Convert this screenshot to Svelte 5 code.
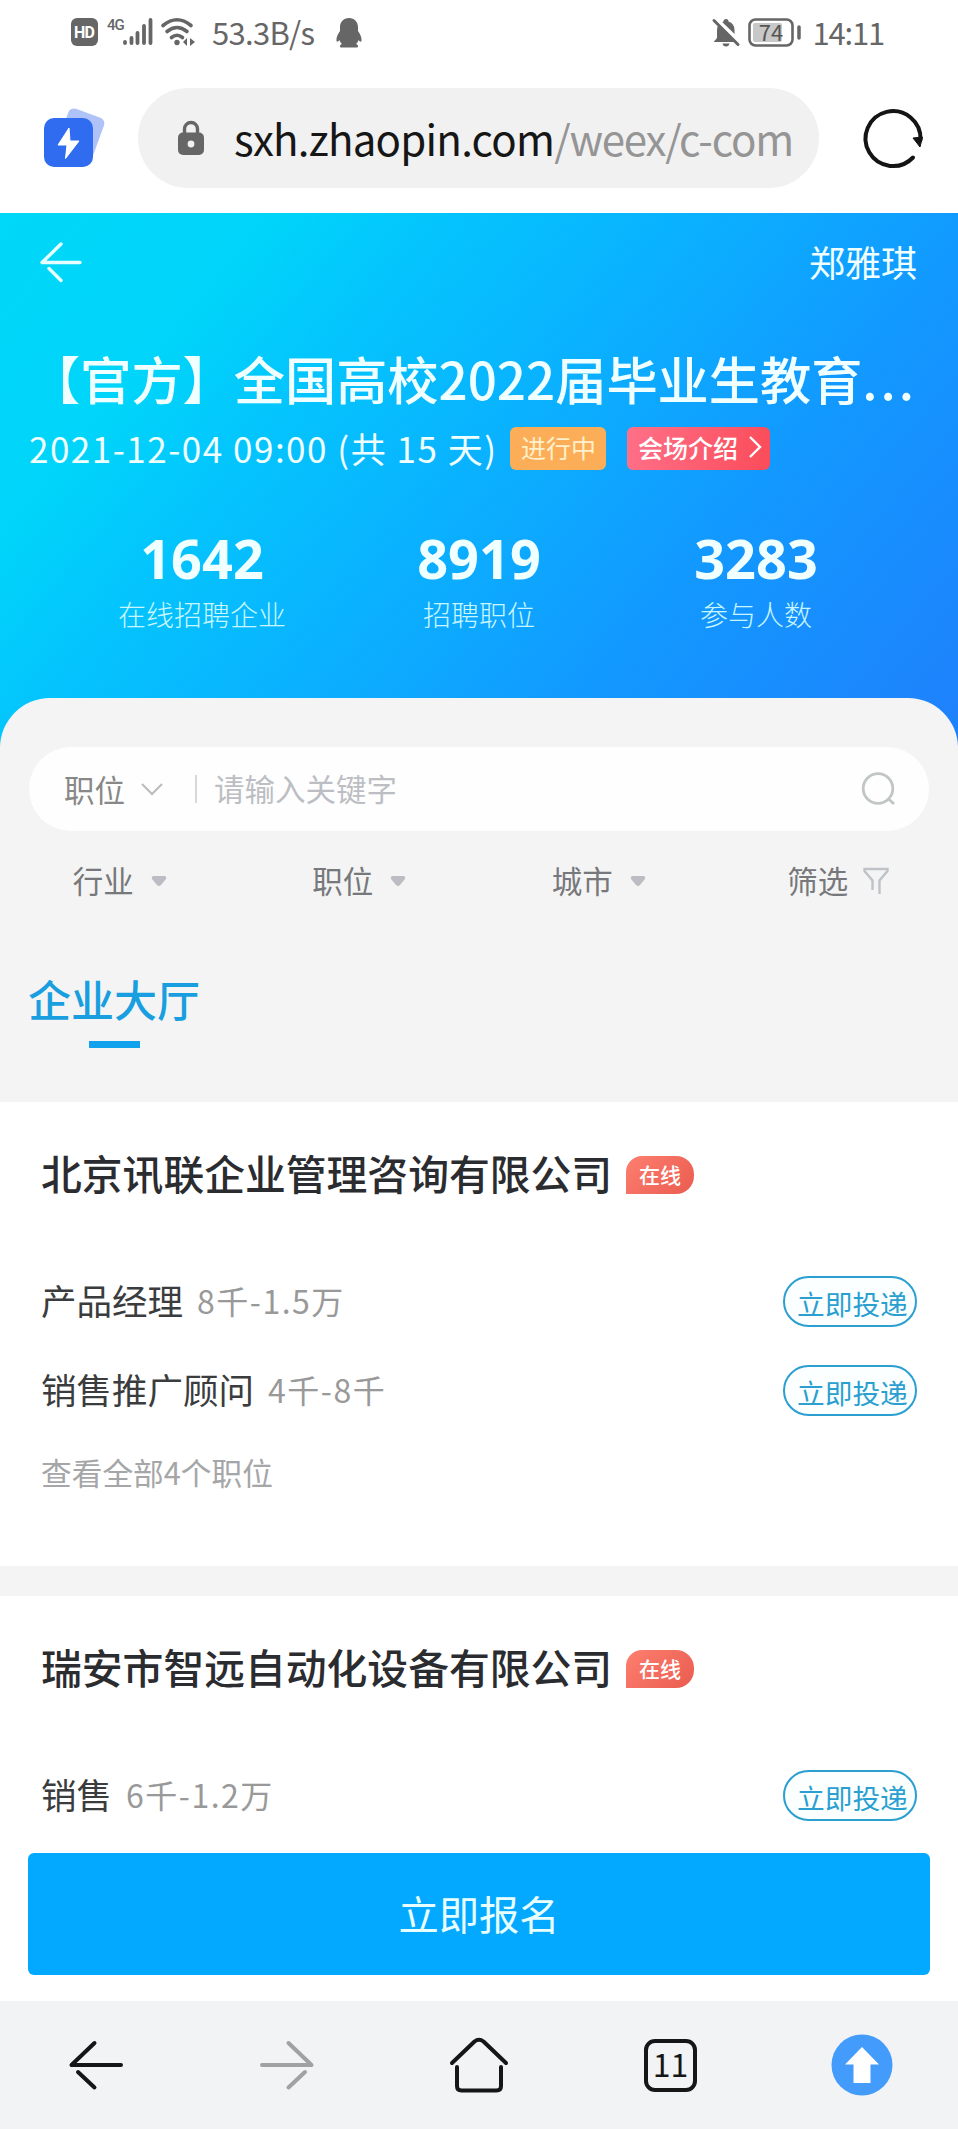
<script lang="ts">
  interface Job {
    title: string;
    salary: string;
  }

  interface Company {
    name: string;
    jobs: Job[];
    total?: number;
  }

  const stats = [
    { value: 1642, label: "在线招聘企业" },
    { value: 8919, label: "招聘职位" },
    { value: 3283, label: "参与人数" },
  ];

  const filters: string[] = ["行业", "职位", "城市"];

  const companies: Company[] = [
    {
      name: "北京讯联企业管理咨询有限公司",
      jobs: [
        { title: "产品经理", salary: "8千-1.5万" },
        { title: "销售推广顾问", salary: "4千-8千" },
      ],
      total: 4,
    },
    {
      name: "瑞安市智远自动化设备有限公司",
      jobs: [{ title: "销售", salary: "6千-1.2万" }],
    },
  ];

  let keyword: string = $state("");
</script>

<div class="screen">
  <div class="status">
    <svg class="hd" width="27" height="28" viewBox="0 0 27 28">
      <rect width="27" height="28" rx="6" fill="#666" />
      <text x="13.5" y="19.5" text-anchor="middle" textLength="21">HD</text>
    </svg>
    <span class="net">4G</span>
    <svg class="bars" width="30" height="28" viewBox="0 0 30 28">
      <g stroke="#666" stroke-width="3.8" stroke-linecap="round">
        <path d="M2 25v-1M8.5 25v-5M14.5 25v-10M21 25V8M27.5 25V2" />
      </g>
    </svg>
    <svg class="wifi" width="34" height="28" viewBox="0 0 34 28">
      <g fill="none" stroke="#666" stroke-width="3.6" stroke-linecap="round">
        <path d="M2 7.5Q16 -4 30 7.5M6 13.5Q16 5.5 26 13.5M10.5 19.5Q16 15 21.5 19.5" />
      </g>
      <circle cx="16" cy="24.5" r="2.7" fill="#666" />
      <path d="M26 20v8l-4-4zM29 20v8l5-4z" fill="#666" />
    </svg>
    <span class="speed">53.3B/s</span>
    <svg class="qq" width="26" height="30" viewBox="0 0 26 30">
      <path
        fill="#666"
        d="M13 0C7.5 0 4 4 4 9v4C2 16 0 19 .5 23c.5 1.5 2 .5 3-1 .5 2 1.5 3 2.500 4-2 .7-3 3-1 3.500h16c2-.5 1-2.800-1-3.500 1-1 2-2 2.500-4 1 1.500 2.500 2.500 3 1 .5-4-1.500-7-3.500-10V9c0-5-3.500-9-9-9z"
      />
    </svg>
    <svg class="bell" width="28" height="30" viewBox="0 0 28 30">
      <path
        fill="#666"
        d="M11.5 3.5Q11.5 1 14 1t2.5 2.5Q22.5 5.5 22.5 12v8l3 3.5v.5H2v-.5L5 20v-8Q5 5.500 11.5 3.5zM10.5 25.5h7q-.5 3-3.500 3t-3.500-3z"
      />
      <path d="M2 -1L29 25" stroke="#fff" stroke-width="4" />
      <path d="M2 2.5L26 26.5" stroke="#666" stroke-width="3" stroke-linecap="round" />
    </svg>
    <svg class="battery" width="54" height="30" viewBox="0 0 54 30">
      <rect x="1.5" y="1.5" width="43" height="26" rx="6" fill="none" stroke="#666" stroke-width="2.6" />
      <rect x="5" y="5" width="29" height="19" rx="2" fill="#c8c8c8" />
      <path d="M51 9v11" stroke="#666" stroke-width="3.5" stroke-linecap="round" />
      <text x="23" y="22.5" text-anchor="middle">74</text>
    </svg>
    <span class="clock">14:11</span>
  </div>

  <div class="address">
    <svg class="flash" width="64" height="62" viewBox="0 0 64 62">
      <rect x="19" y="5" width="38" height="44" rx="6" fill="#afc3f8" transform="rotate(20 38 26)" />
      <rect x="1" y="11" width="49" height="49" rx="10" fill="#2f6cf0" />
      <path d="M26 21L15 38h9l-1.500 13.500L36 34h-9z" fill="#fff" stroke="#fff" stroke-linejoin="round" />
    </svg>
    <div class="url-bar">
      <svg width="28" height="36" viewBox="0 0 28 36">
        <path d="M7.5 14V9a6.500 6.500 0 0 1 13 0v5" fill="none" stroke="#666" stroke-width="3.4" />
        <rect x="1" y="12.5" width="26" height="22.5" rx="5" fill="#666" />
        <circle cx="14" cy="24" r="3.4" fill="#f1f1f1" />
      </svg>
      <div class="url">sxh.zhaopin.com<span>/weex/c-com</span></div>
    </div>
    <svg class="reload" width="62" height="62" viewBox="0 0 62 62">
      <path
        d="M50 50.500A27.500 27.500 0 1 1 57.500 33"
        fill="none"
        stroke="#141414"
        stroke-width="4"
        stroke-linecap="round"
      />
      <path d="M50 31l9.500-1-2.500 10z" fill="#141414" stroke="#141414" stroke-linejoin="round" />
    </svg>
  </div>

  <section class="hero">
    <div class="hero-top">
      <svg width="44" height="42" viewBox="0 0 44 42">
        <path
          d="M22 3L3 21.500h38M10 27.500l12 12"
          fill="none"
          stroke="#e6ffff"
          stroke-width="3.4"
          stroke-linecap="round"
          stroke-linejoin="round"
        />
      </svg>
      <span>郑雅琪</span>
    </div>
    <h1>【官方】全国高校2022届毕业生教育<span>...</span></h1>
    <div class="meta">
      <span class="date">2021-12-04 09:00 (共 15 天)</span>
      <span class="tag running">进行中</span>
      <span class="tag intro">
        会场介绍
        <svg width="14" height="24" viewBox="0 0 14 24">
          <path d="M2 2l10 10L2 22" fill="none" stroke="#fff" stroke-width="2.4" />
        </svg>
      </span>
    </div>
    <div class="stats">
      {#each stats as stat}
        <div class="stat">
          <strong>{stat.value}</strong>
          <span>{stat.label}</span>
        </div>
      {/each}
    </div>
  </section>

  <section class="sheet">
    <div class="search">
      <span class="kind">职位</span>
      <svg class="chevron" width="24" height="14" viewBox="0 0 24 14">
        <path d="M2 2l10 10L22 2" fill="none" stroke="#bbb" stroke-width="2" />
      </svg>
      <i></i>
      <input type="text" placeholder="请输入关键字" bind:value={keyword} />
      <svg class="lens" width="36" height="34" viewBox="0 0 36 34">
        <g fill="none" stroke="#c2c5c5" stroke-width="2.8">
          <circle cx="18" cy="16.5" r="14.8" />
          <path d="M28 26.500l6 5.500" />
        </g>
      </svg>
    </div>
    <div class="filters">
      {#each filters as filter}
        <div class="filter">
          <span>{filter}</span>
          <svg width="16" height="12" viewBox="0 0 16 12">
            <path d="M2 1h12q2 1 1 3l-5 6q-2 2-4 0L1 4Q0 2 2 1z" fill="#bbbdc2" />
          </svg>
        </div>
      {/each}
      <div class="filter funnel">
        <span>筛选</span>
        <svg width="26" height="28" viewBox="0 0 26 28">
          <path
            d="M9.500 23V13.500L1.500 4V2h23v2l-8 9.500V27"
            fill="none"
            stroke="#bfc3c7"
            stroke-width="2.4"
          />
        </svg>
      </div>
    </div>
    <div class="tab">企业大厅</div>
  </section>

  {#each companies as company}
    <section class="company" class:full={company.total}>
      <div class="name">
        <h2>{company.name}</h2>
        <span class="online">在线</span>
      </div>
      {#each company.jobs as job}
        <div class="job">
          <span class="title">{job.title}</span>
          <span class="salary">{job.salary}</span>
          <button>立即投递</button>
        </div>
      {/each}
      {#if company.total}
        <div class="all">查看全部{company.total}个职位</div>
      {/if}
    </section>
  {/each}

  <div class="apply">
    <button>立即报名</button>
  </div>

  <nav>
    <div>
      <svg width="56" height="52" viewBox="0 0 56 52">
        <path
          d="M26.500 4L3.500 26H53M10 33l16.500 15.500"
          fill="none"
          stroke="#161616"
          stroke-width="4"
          stroke-linecap="round"
          stroke-linejoin="round"
        />
      </svg>
    </div>
    <div>
      <svg width="56" height="52" viewBox="0 0 56 52">
        <path
          d="M29.500 4l23 22H3M46 33L29.500 48.500"
          fill="none"
          stroke="#a0a1a2"
          stroke-width="4"
          stroke-linecap="round"
          stroke-linejoin="round"
        />
      </svg>
    </div>
    <div>
      <svg width="60" height="56" viewBox="0 0 60 56">
        <g fill="none" stroke="#161616" stroke-width="4" stroke-linecap="round" stroke-linejoin="round">
          <path d="M3 26L25.500 4.500Q30 1 34.500 4.500L57 26" />
          <path d="M8 30v19q0 4.500 4.500 4.500h35q4.500 0 4.500-4.500V30" />
        </g>
      </svg>
    </div>
    <div>
      <span class="tabs">11</span>
    </div>
    <div>
      <svg width="62" height="62" viewBox="0 0 62 62">
        <circle cx="31" cy="31" r="30.5" fill="#439bfb" />
        <path d="M31 13l17 17.500h-8.500V49h-17V30.500H14z" fill="#fff" />
      </svg>
    </div>
  </nav>
</div>

<style>
  :global(body) {
    background: #fff;
  }

  .screen {
    width: 958px;
    height: 2129px;
    overflow: hidden;
    display: flex;
    flex-direction: column;
    background: #fff;
    font-family: "Noto Sans CJK SC", "Noto Sans", sans-serif;
  }

  .screen > * {
    flex-shrink: 0;
    box-sizing: border-box;
  }

  svg {
    display: block;
    flex-shrink: 0;
    overflow: visible;
  }

  .status {
    display: flex;
    align-items: flex-start;
    height: 88px;
    padding: 18px 74px 0 71px;
    color: #666;
  }

  .hd text {
    font: bold 16px "Roboto", sans-serif;
    fill: #fff;
  }

  .net {
    width: 16px;
    margin-left: 9px;
    font: 500 15px/15px "Roboto", sans-serif;
    letter-spacing: -1px;
  }

  .wifi {
    margin-left: 8px;
  }

  .speed {
    width: 107px;
    margin-left: 17px;
    font-size: 31px;
    line-height: 28px;
    letter-spacing: -0.7px;
    white-space: nowrap;
  }

  .qq {
    margin-left: 17px;
  }

  .bell {
    margin-left: auto;
  }

  .battery {
    margin-left: 8px;
  }

  .battery text {
    font-size: 22px;
    fill: #555;
  }

  .clock {
    margin-left: 11px;
    font-size: 31px;
    line-height: 28px;
    letter-spacing: -1.2px;
  }

  .address {
    display: flex;
    align-items: center;
    height: 125px;
    padding: 0 33px 25px 43px;
  }

  .url-bar {
    display: flex;
    align-items: center;
    flex: 1;
    height: 100px;
    margin: 0 44px 0 31px;
    padding: 0 22px 0 39px;
    border-radius: 50px;
    background: #f1f1f1;
    box-sizing: border-box;
  }

  .url {
    flex: 1;
    width: 0;
    margin-left: 29px;
    overflow: hidden;
    white-space: nowrap;
    font-size: 42px;
    line-height: 64px;
    letter-spacing: -0.75px;
    color: #161616;
  }

  .url span {
    letter-spacing: -1.2px;
    color: #959595;
  }

  .hero {
    height: 533px;
    padding: 21px 29px 0;
    color: #f0ffff;
    background: linear-gradient(
      130deg,
      #00d8f8 0%,
      #00d4fa 20%,
      #04c4fd 32%,
      #0cacff 54%,
      #1299ff 70%,
      #1f80fc 100%
    );
  }

  .hero-top {
    display: flex;
    align-items: center;
    justify-content: space-between;
    height: 56px;
    padding: 0 12px 0 10px;
    font-size: 36px;
  }

  .hero-top span {
    padding-bottom: 3px;
  }

  h1 {
    margin: 50px -20px 0 0;
    font-size: 51.2px;
    line-height: 76px;
    font-weight: 500;
    white-space: nowrap;
  }

  h1 span {
    letter-spacing: 3px;
  }

  .meta {
    display: flex;
    align-items: center;
    height: 50px;
    margin-top: 7px;
  }

  .date {
    width: 481px;
    padding-bottom: 2px;
    font-size: 35px;
    letter-spacing: 1.5px;
    white-space: nowrap;
  }

  .tag {
    display: flex;
    align-items: center;
    height: 43px;
    padding: 0 0 2px 11px;
    border-radius: 6px;
    font-size: 25px;
    white-space: nowrap;
    box-sizing: border-box;
  }

  .running {
    width: 96px;
    color: #fff0cc;
    background: #fbae57;
  }

  .intro {
    width: 143px;
    margin-left: 21px;
    justify-content: space-between;
    padding-right: 8px;
    color: #fff;
    font-weight: 500;
    background: linear-gradient(100deg, #ff7088, #fb4c5a);
  }

  .stats {
    display: flex;
    justify-content: center;
    margin-top: 50px;
  }

  .stat {
    display: flex;
    flex-direction: column;
    align-items: center;
    width: 277px;
  }

  .stat strong {
    font: bold 54px/70px "Noto Sans", sans-serif;
  }

  .stat span {
    margin-top: 1px;
    font-size: 28px;
    line-height: 40px;
    font-weight: 300;
    color: #c8f6ff;
  }

  .sheet {
    height: 404px;
    margin-top: -48px;
    padding-top: 49px;
    border-radius: 50px 50px 0 0;
    background: #f4f4f4;
  }

  .search {
    display: flex;
    align-items: center;
    height: 84px;
    margin: 0 29px;
    padding: 0 33px 0 35px;
    border-radius: 42px;
    background: #fefefe;
    font-size: 30.5px;
  }

  .kind {
    padding-bottom: 1px;
    color: #888;
  }

  .chevron {
    margin-left: 15px;
  }

  .search i {
    width: 2px;
    height: 28px;
    margin: 0 17px 0 31px;
    background: #d8d8dc;
  }

  .search input {
    flex: 1;
    min-width: 0;
    padding: 0 0 3px;
    border: 0;
    outline: none;
    background: none;
    font: inherit;
    color: #666;
  }

  .search input::placeholder {
    color: #bcbec4;
    opacity: 1;
  }

  .filters {
    display: flex;
    height: 100px;
  }

  .filter {
    display: flex;
    align-items: center;
    justify-content: center;
    gap: 17px;
    width: 25%;
    font-size: 30.5px;
    color: #77787b;
  }

  .filter span {
    padding-bottom: 2px;
  }

  .funnel {
    gap: 15px;
  }

  .tab {
    display: flex;
    flex-direction: column;
    align-items: center;
    width: 170px;
    margin: 35px 29px 0;
    font-size: 43px;
    line-height: 64px;
    font-weight: 500;
    white-space: nowrap;
    color: #199fdf;
  }

  .tab::after {
    content: "";
    width: 51px;
    height: 7px;
    margin-top: 11px;
    background: #11a2ee;
  }

  .company {
    height: 256px;
    padding: 41px 41px 0;
  }

  .company.full {
    height: 494px;
    border-bottom: 30px solid #f4f4f4;
  }

  .name {
    display: flex;
    align-items: center;
    height: 62px;
    margin-bottom: 51px;
  }

  h2 {
    width: 585px;
    margin: 0;
    padding-bottom: 4px;
    font-size: 40.8px;
    font-weight: 500;
    white-space: nowrap;
    color: #2b2c30;
  }

  .online {
    width: 68px;
    height: 38px;
    margin-top: 2px;
    border-radius: 16px 18px 18px 0;
    font-size: 21px;
    line-height: 36px;
    font-weight: 500;
    text-align: center;
    color: #fff;
    background: linear-gradient(135deg, #fd7f6f, #ea5c50);
  }

  .job {
    display: flex;
    align-items: center;
    height: 89px;
  }

  .title {
    padding-bottom: 2px;
    font-size: 35.5px;
    color: #3b3c3e;
  }

  .salary {
    margin-left: 14px;
    padding-bottom: 2px;
    font-size: 32px;
    letter-spacing: 1.5px;
    color: #999;
  }

  .job button {
    width: 134px;
    height: 51px;
    margin: 1px 0 0 auto;
    padding: 4px 0 0 12px;
    border: 2.5px solid #2b9fd0;
    border-radius: 26px;
    background: #fbffff;
    font-family: inherit;
    font-size: 27.7px;
    line-height: 40px;
    text-align: left;
    white-space: nowrap;
    color: #2b9fd0;
  }

  .all {
    margin-top: 15px;
    font-size: 30.7px;
    line-height: 46px;
    color: #a5a6a8;
  }

  .apply {
    height: 149px;
    padding: 1px 28px 0;
  }

  .apply button {
    width: 902px;
    height: 122px;
    padding: 0 0 4px;
    border: 0;
    border-radius: 6px;
    background: #03a8ff;
    font-family: inherit;
    font-size: 40.3px;
    color: #e8ffff;
  }

  nav {
    display: flex;
    height: 128px;
    background: #f1f3f5;
  }

  nav div {
    display: flex;
    flex: 1;
    align-items: center;
    justify-content: center;
  }

  .tabs {
    width: 53px;
    height: 53px;
    border: 4px solid #161616;
    border-radius: 11px;
    box-sizing: border-box;
    font: 32px/41px "Noto Sans CJK SC", sans-serif;
    text-align: center;
    color: #161616;
  }
</style>
